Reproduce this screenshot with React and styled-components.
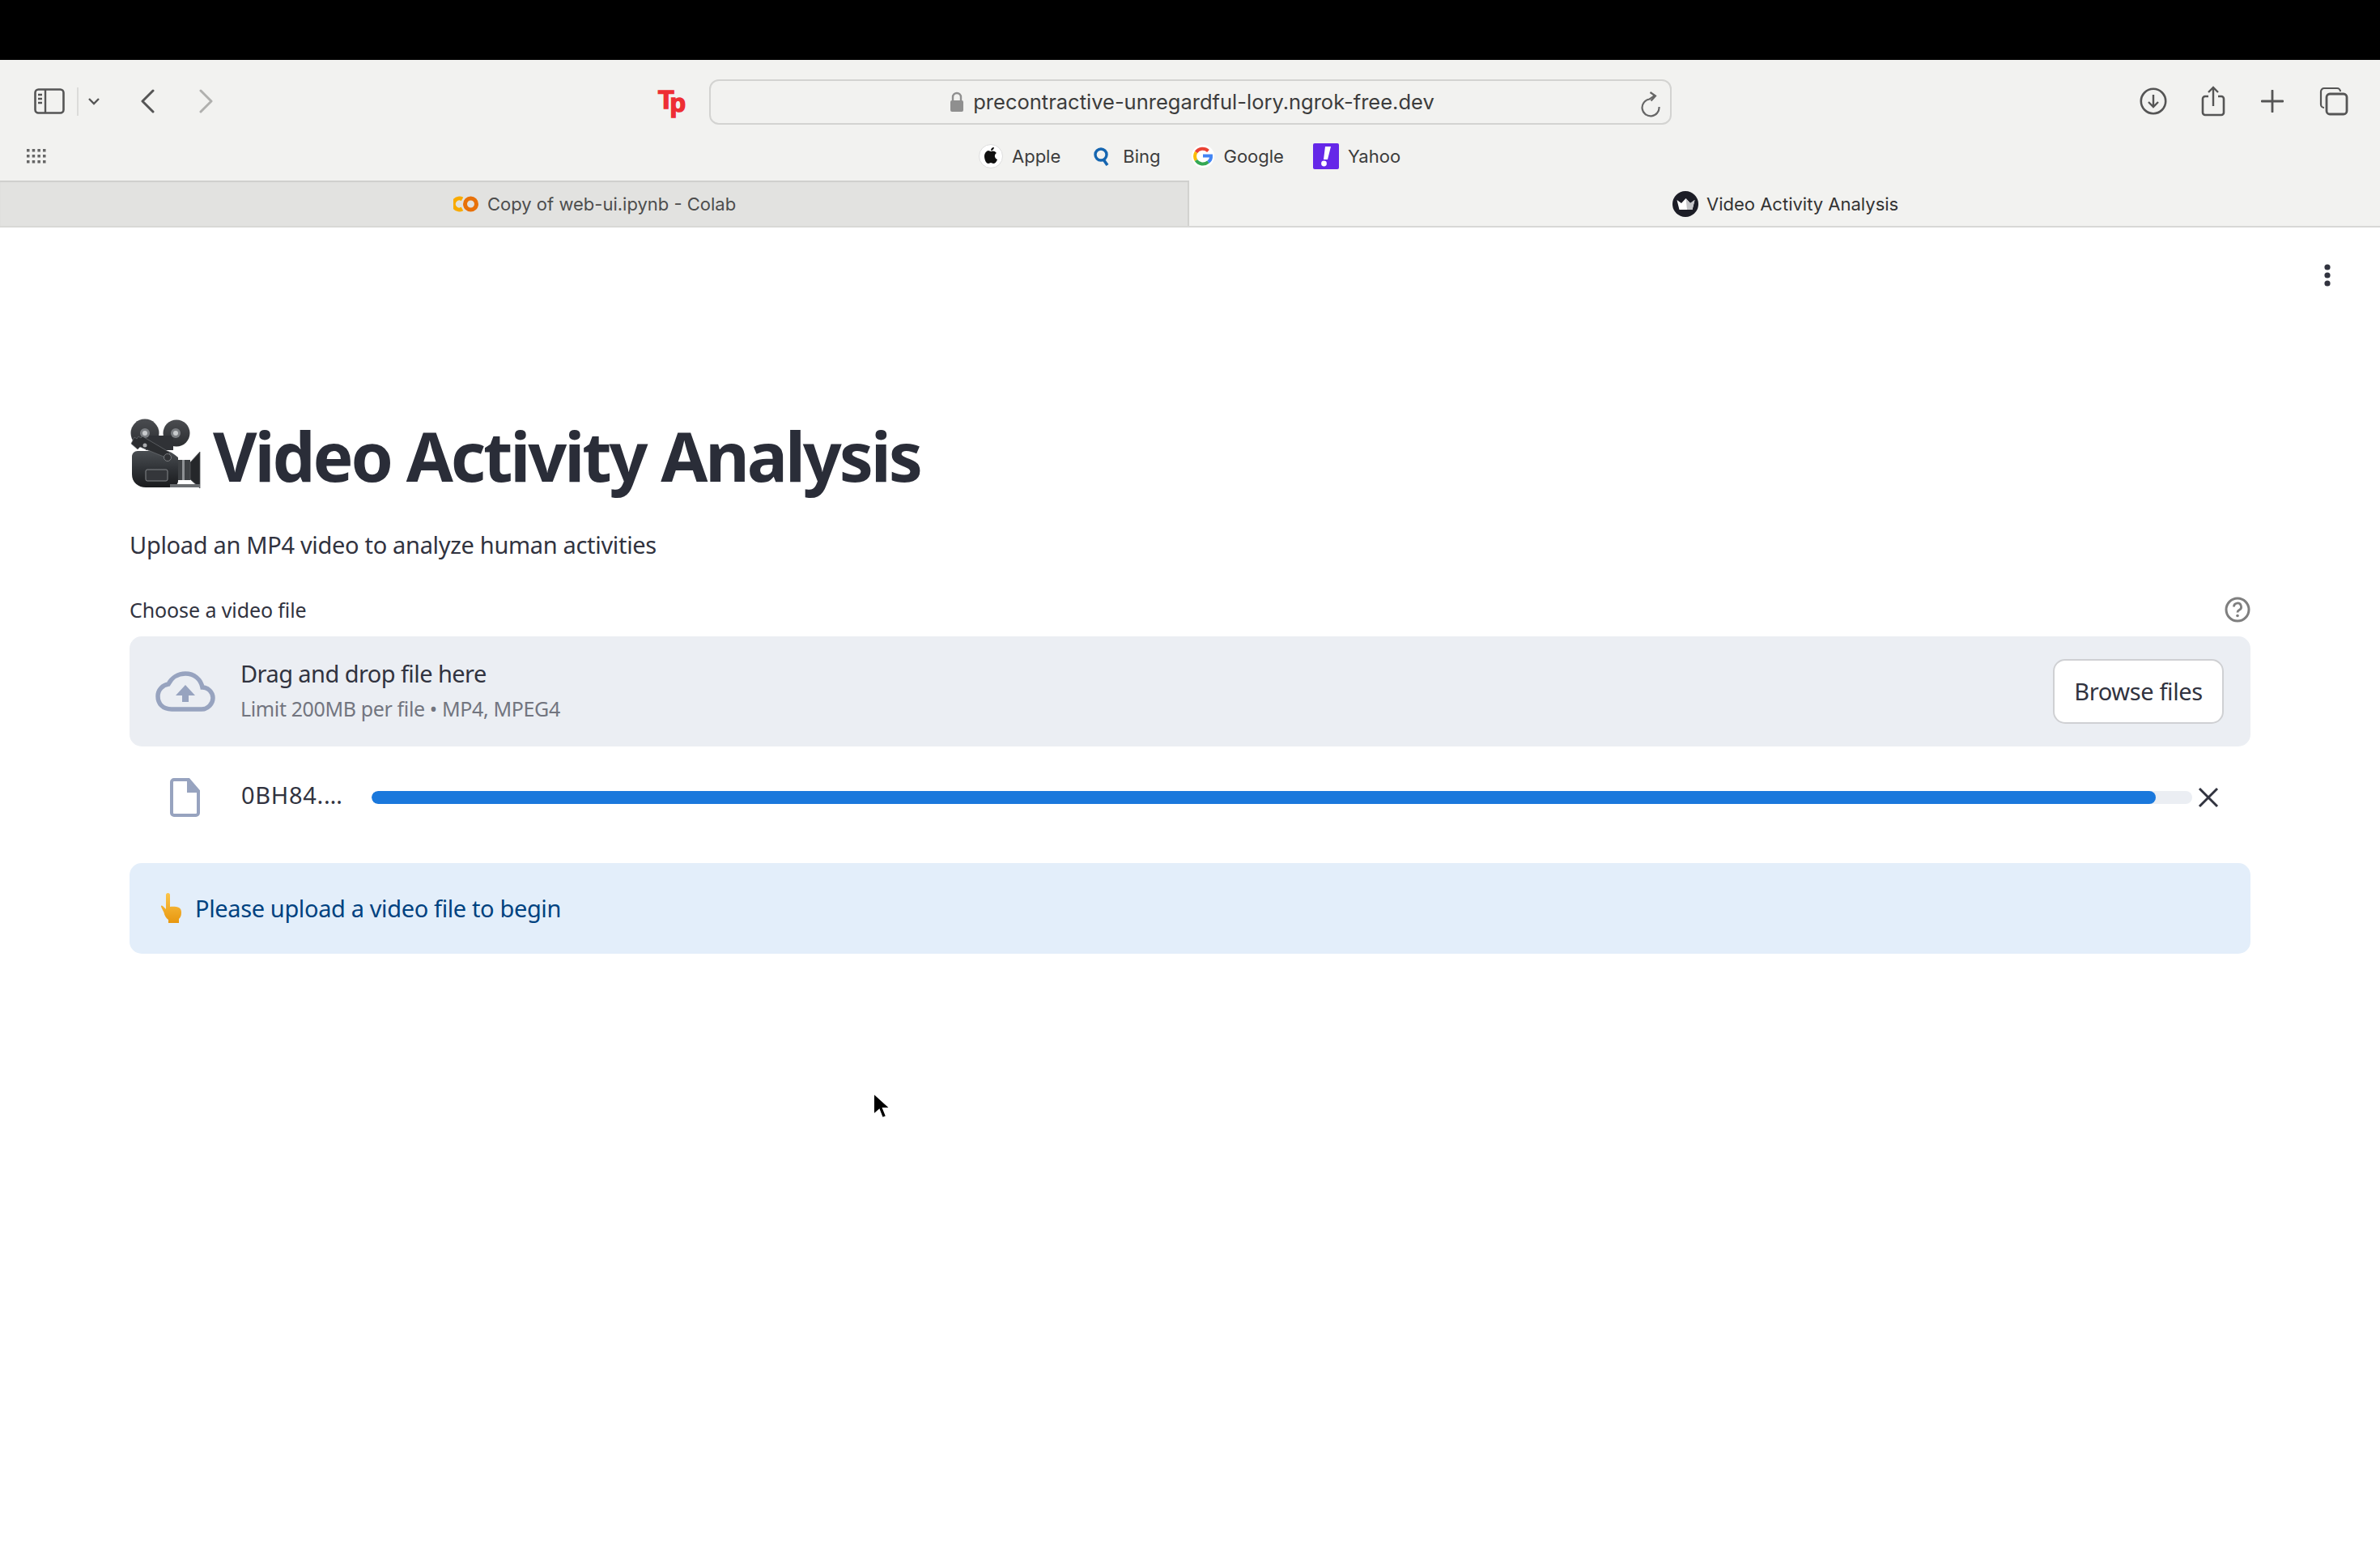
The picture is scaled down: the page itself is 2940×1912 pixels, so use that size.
import React from "react";
import styled, { createGlobalStyle } from "styled-components";

const UI_FONT = `"Noto Sans", "Open Sans", sans-serif`;
const CHROME_FONT = `Inter, "Liberation Sans", sans-serif`;

const Global = createGlobalStyle`
  html, body { margin: 0; padding: 0; background: #fff; }
  body { font-family: ${UI_FONT}; color: #31333f; }
  * { box-sizing: border-box; }
`;

const Page = styled.div`
  position: relative;
  width: 2940px;
  height: 1912px;
  display: flex;
  flex-direction: column;
  background: #fff;
  overflow: hidden;
`;

const BlackBar = styled.div`
  height: 74px;
  background: #000;
`;

const Chrome = styled.header`
  background: #f2f2f0;
  display: flex;
  flex-direction: column;
`;

const ToolRow = styled.div`
  height: 102px;
  display: flex;
  align-items: center;
  padding-left: 42px;
`;

const Tool = styled.svg`
  flex: none;
  margin-left: ${p => p.$ml || 0}px;
  display: block;
`;

const Divider = styled.div`
  width: 2px;
  height: 35px;
  background: #dcdcda;
  margin-left: 15px;
`;

const TpLogo = styled.div`
  flex: none;
  width: 36px;
  height: 34px;
  margin-left: 549px;
  display: flex;
  color: #ee2e34;
  font: 700 32px/30px "Liberation Sans", sans-serif;
  -webkit-text-stroke: 1.5px #ee2e34;
  span + span {
    margin-left: -5px;
    margin-top: 4px;
  }
`;

const AddressBar = styled.div`
  flex: none;
  width: 1189px;
  height: 56px;
  margin: 2px 0 0 27px;
  padding-left: 4px;
  border: 2px solid #d3d3d1;
  border-radius: 12px;
  display: flex;
  align-items: center;
  justify-content: center;
  position: relative;
  gap: 11px;
`;

const AddressText = styled.span`
  font: 400 25.5px/30px ${CHROME_FONT};
  color: #3c3c3c;
`;

const ReloadSlot = styled.svg`
  position: absolute;
  right: 10px;
  top: 13px;
`;

const RightTools = styled.div`
  margin-left: auto;
  margin-right: 39px;
  display: flex;
  align-items: center;
`;

const BookmarkRow = styled.div`
  height: 47px;
  padding: 0 0 13px 33px;
  display: flex;
  align-items: center;
`;

const Bookmarks = styled.nav`
  display: flex;
  align-items: center;
  margin-left: 1152px;
`;

const Bookmark = styled.a`
  display: flex;
  align-items: center;
  margin-right: ${p => p.$mr}px;
  gap: ${p => p.$gap}px;
  font: 400 22px/30px ${CHROME_FONT};
  color: #3c3c3c;
`;

const Tabs = styled.div`
  height: 58px;
  display: flex;
  border-bottom: 2px solid #d8d8d6;
`;

const Tab = styled.div`
  flex: ${p => (p.$active ? "1" : "none")};
  width: ${p => (p.$active ? "auto" : "1469px")};
  background: ${p => (p.$active ? "#f2f2f0" : "#e2e2e0")};
  box-shadow: ${p => (p.$active ? "none" : "inset 0 2px 1px #cfcfcd, inset -2px 0 0 #d2d2d0")};
  display: flex;
  align-items: center;
  padding-left: ${p => (p.$active ? "597px" : "560px")};
  padding-top: 2px;
  gap: 10px;
  font: 400 22px/30px ${CHROME_FONT};
  color: ${p => (p.$active ? "#333" : "#4d4d4d")};
`;

const MenuRow = styled.div`
  height: 117px;
  display: flex;
  justify-content: flex-end;
  align-items: center;
  padding-right: 60px;
`;

const Content = styled.main`
  padding: 0 160px;
  display: flex;
  flex-direction: column;
`;

const TitleRow = styled.div`
  display: flex;
  align-items: center;
  height: 124px;
  margin-top: 103px;
  gap: 13px;
`;

const Title = styled.h1`
  margin: 0;
  font: 700 84px/124px ${UI_FONT};
  letter-spacing: -3.1px;
  color: #2a2d38;
`;

const CameraSvg = styled.svg`
  flex: none;
  margin-top: -6px;
`;

const Subtitle = styled.p`
  margin: 28px 0 0;
  font: 400 29px/40px ${UI_FONT};
  letter-spacing: -0.32px;
  color: #31333f;
`;

const LabelRow = styled.div`
  margin-top: 40px;
  height: 40px;
  display: flex;
  align-items: center;
  justify-content: space-between;
`;

const Label = styled.label`
  font: 400 25px/40px ${UI_FONT};
  letter-spacing: -0.1px;
  color: #31333f;
`;

const Dropzone = styled.section`
  margin-top: 13px;
  height: 136px;
  background: #ebeef3;
  border-radius: 15px;
  display: flex;
  align-items: center;
  padding: 0 33px 0 32px;
`;

const DropText = styled.div`
  margin-left: 31px;
  display: flex;
  flex-direction: column;
  flex: 1;
`;

const DropTitle = styled.div`
  font: 400 29px/42px ${UI_FONT};
  letter-spacing: -0.57px;
  color: #31333f;
`;

const DropHint = styled.div`
  font: 400 25px/44px ${UI_FONT};
  letter-spacing: -0.37px;
  color: #72757f;
`;

const BrowseButton = styled.button`
  width: 211px;
  height: 80px;
  background: #fff;
  border: 2px solid #cfd0d3;
  border-radius: 15px;
  font: 400 29px/40px ${UI_FONT};
  letter-spacing: -0.37px;
  color: #31333f;
`;

const FileRow = styled.div`
  height: 144px;
  display: flex;
  align-items: center;
  padding: 0 0 18px 49px;
`;

const FileName = styled.span`
  margin-left: 51px;
  margin-top: -7px;
  width: 161px;
  font: 400 29px/40px ${UI_FONT};
  letter-spacing: 0.7px;
  color: #31333f;
`;

const Track = styled.div`
  width: 2249px;
  height: 16px;
  background: #ebeef3;
  border-radius: 8px;
  overflow: hidden;
`;

const Fill = styled.div`
  height: 100%;
  background: #1a78dc;
  border-radius: 8px;
`;

const Close = styled.svg`
  margin-left: 7px;
`;

const Alert = styled.section`
  height: 112px;
  background: #e3eefa;
  border-radius: 15px;
  display: flex;
  align-items: center;
  padding-left: 38px;
  gap: 16px;
`;

const AlertText = styled.span`
  font: 400 29px/40px ${UI_FONT};
  letter-spacing: -0.37px;
  color: #004280;
`;

const Cursor = styled.svg`
  position: absolute;
  left: 1076px;
  top: 1348px;
`;

const CameraIcon = () => (
  <CameraSvg width="90" height="90" viewBox="10 15 90 90">
    <defs>
      <linearGradient id="camBody" x1="0" y1="0" x2="0" y2="1">
        <stop offset="0" stopColor="#4a4e52" />
        <stop offset="0.5" stopColor="#2f3236" />
        <stop offset="1" stopColor="#1a1b1d" />
      </linearGradient>
      <linearGradient id="camReel" x1="0" y1="0" x2="0" y2="1">
        <stop offset="0" stopColor="#4a4c50" />
        <stop offset="1" stopColor="#2c2e31" />
      </linearGradient>
    </defs>
    <circle cx="29" cy="35" r="17.5" fill="url(#camReel)" />
    <circle cx="68" cy="35" r="16.5" fill="url(#camReel)" />
    <rect x="30" y="38" width="34" height="18" fill="#303236" />
    <circle cx="29" cy="35" r="6" fill="#7b7e82" />
    <circle cx="29" cy="35" r="3" fill="#c9cbcd" />
    <circle cx="67" cy="35" r="6" fill="#7b7e82" />
    <circle cx="67" cy="35" r="3" fill="#c9cbcd" />
    <path d="M13 64c0-4 3-7 7-7h36c4 0 9 4 14 8v29c0 5-5 8-10 8H30c-9 0-17-6-17-16z" fill="url(#camBody)" />
    <rect x="30" y="80" width="27" height="14" rx="2" fill="#34363a" stroke="#84878a" strokeWidth="1" />
    <path d="M12 48l4-8 3 2 2-3 3 2 2-2 34 20-3 7-34-14-3 3z" fill="#2b2d30" stroke="#6c6f72" strokeWidth="0.7" />
    <circle cx="29" cy="50" r="2.5" fill="#a9abad" />
    <circle cx="57" cy="65" r="4.5" fill="#303235" stroke="#8a8d90" strokeWidth="0.8" />
    <rect x="70" y="68" width="15" height="25" fill="#3e4144" />
    <rect x="75" y="68" width="3" height="25" fill="#8d9093" />
    <path d="M85 71l12-13v45l-12-11z" fill="#25272a" stroke="#55585b" strokeWidth="0.8" />
    <path d="M60 98h37v4H60z" fill="#6a6d70" />
  </CameraSvg>
);

const CloudIcon = () => (
  <svg width="74" height="50" viewBox="0 0 74 50" style={{ flex: "none" }}>
    <path
      d="M20 47C9 47 3 40 3 31c0-8 6-14 13-15C20 8 28 3 37 3c11 0 19 7 21 17 7 0 13 6 13 13s-6 14-14 14z"
      fill="none"
      stroke="#97a3bf"
      strokeWidth="5.5"
    />
    <path d="M37 17L49 30H41V38H33V30H25z" fill="#97a3bf" />
  </svg>
);

const FileIcon = () => (
  <svg width="38" height="48" viewBox="0 0 38 48" style={{ flex: "none" }}>
    <path
      d="M3 5a3 3 0 0 1 3-3h18l12 14v27a3 3 0 0 1-3 3H6a3 3 0 0 1-3-3z"
      fill="#fff"
      stroke="#97a3bf"
      strokeWidth="4"
    />
    <path d="M22 2v16h14z" fill="#97a3bf" />
  </svg>
);

const HandIcon = () => (
  <svg width="27" height="38" viewBox="0 0 27 38" style={{ flex: "none" }}>
    <defs>
      <linearGradient id="handFill" x1="0" y1="0" x2="0" y2="1">
        <stop offset="0" stopColor="#fbc54a" />
        <stop offset="1" stopColor="#e8970f" />
      </linearGradient>
    </defs>
    <path
      d="M7 2.500a2.500 2.500 0 0 1 5 0V17c4-.5 9 0 11 1 2 1 3 3 3 6 0 4-1 6-3 8v5H10v-4C7 31 5 27 4.500 24L1 17c-.5-1.500 1-2 2-1l4 4z"
      fill="url(#handFill)"
    />
  </svg>
);

export default function App() {
  return (
    <Page>
      <Global />
      <BlackBar />
      <Chrome>
        <ToolRow>
          <Tool width="38" height="32" viewBox="0 0 38 32">
            <rect x="1.500" y="1.500" width="35" height="29" rx="4" fill="none" stroke="#555" strokeWidth="2.6" />
            <path d="M14 2v28" stroke="#555" strokeWidth="2.4" />
            <path d="M5 8h5M5 13h5M5 18h5" stroke="#555" strokeWidth="2.4" />
          </Tool>
          <Divider />
          <Tool $ml={11} width="16" height="10" viewBox="0 0 16 10">
            <path d="M2 2l6 6 6-6" fill="none" stroke="#555" strokeWidth="2.4" />
          </Tool>
          <Tool $ml={49} width="18" height="30" viewBox="0 0 18 30">
            <path d="M16 2L3 15l13 13" fill="none" stroke="#555" strokeWidth="3" strokeLinecap="round" strokeLinejoin="round" />
          </Tool>
          <Tool $ml={55} width="18" height="30" viewBox="0 0 18 30">
            <path d="M2 2l13 13L2 28" fill="none" stroke="#b0b0ae" strokeWidth="3" strokeLinecap="round" strokeLinejoin="round" />
          </Tool>
          <TpLogo>
            <span>T</span>
            <span>p</span>
          </TpLogo>
          <AddressBar>
            <svg width="18" height="26" viewBox="0 0 18 26">
              <path d="M4 12V7a5 5 0 0 1 10 0v5" fill="none" stroke="#8f8f8f" strokeWidth="2.4" />
              <rect x="1" y="11" width="16" height="14" rx="2" fill="#8f8f8f" />
            </svg>
            <AddressText>precontractive-unregardful-lory.ngrok-free.dev</AddressText>
            <ReloadSlot width="28" height="32" viewBox="0 0 28 32">
              <path d="M24.500 19A10.500 10.500 0 1 1 12.500 9.500C15 8 17 6 20 5" fill="none" stroke="#666" strokeWidth="2.2" />
              <path d="M13.500 1l6.500 4.500-5.500 6" fill="none" stroke="#666" strokeWidth="2.2" />
            </ReloadSlot>
          </AddressBar>
          <RightTools>
            <Tool width="34" height="34" viewBox="0 0 34 34">
              <circle cx="17" cy="17" r="15.200" fill="none" stroke="#555" strokeWidth="2.6" />
              <path d="M17 9v15M11 18l6 6 6-6" fill="none" stroke="#555" strokeWidth="2.4" />
            </Tool>
            <Tool $ml={42} width="30" height="38" viewBox="0 0 30 38">
              <path d="M9 13H5a3 3 0 0 0-3 3v17a3 3 0 0 0 3 3h20a3 3 0 0 0 3-3V16a3 3 0 0 0-3-3h-4" fill="none" stroke="#555" strokeWidth="2.6" />
              <path d="M15 25V2M9 8l6-6 6 6" fill="none" stroke="#555" strokeWidth="2.4" />
            </Tool>
            <Tool $ml={44} width="28" height="28" viewBox="0 0 28 28">
              <path d="M14 1v26M1 14h26" stroke="#555" strokeWidth="2.8" strokeLinecap="round" />
            </Tool>
            <Tool $ml={44} width="36" height="36" viewBox="0 0 36 36">
              <path d="M6 26a4 4 0 0 1-4-4V6a4 4 0 0 1 4-4h16a4 4 0 0 1 4 4" fill="none" stroke="#555" strokeWidth="2.2" />
              <rect x="9" y="9" width="25" height="25" rx="4" fill="#f2f2f0" stroke="#555" strokeWidth="2.8" />
            </Tool>
          </RightTools>
        </ToolRow>
        <BookmarkRow>
          <Tool width="24" height="18" viewBox="0 0 24 18">
            {[0, 7, 14].map(y =>
              [0, 6.7, 13.4, 20].map(x => <rect key={`${x}-${y}`} x={x} y={y} width="3.5" height="3.5" fill="#666" />)
            )}
          </Tool>
          <Bookmarks>
            <Bookmark $mr={41} $gap={11}>
              <svg width="30" height="30" viewBox="0 0 30 30">
                <circle cx="15" cy="15" r="14.500" fill="#fff" stroke="#ddd" />
                <path d="M15 9c2-1 5-1 7 2-3 2-3 6 1 8-1 3-3 5-5 5-1 0-2-1-3-1s-2 1-3 1c-3 0-5-5-5-9s3-7 5-7c1 0 2 1 3 1zM15 8c0-2 1-4 4-4 0 2-2 4-4 4z" fill="#111" />
              </svg>
              Apple
            </Bookmark>
            <Bookmark $mr={38} $gap={16}>
              <svg width="20" height="24" viewBox="0 0 20 24">
                <circle cx="9" cy="10" r="7" fill="none" stroke="#1565b0" strokeWidth="3.4" />
                <path d="M12 16l5 7" stroke="#1565b0" strokeWidth="3.6" />
              </svg>
              Bing
            </Bookmark>
            <Bookmark $mr={36} $gap={12}>
              <svg width="28" height="30" viewBox="0 0 28 30">
                <circle cx="14" cy="15" r="14" fill="#fff" />
                <path d="M20.500 8.500A10 10 0 0 0 5.500 10" fill="none" stroke="#ea4335" strokeWidth="4" />
                <path d="M5.500 10a10 10 0 0 0 0 10" fill="none" stroke="#fbbc05" strokeWidth="4" />
                <path d="M5.500 20a10 10 0 0 0 15 2" fill="none" stroke="#34a853" strokeWidth="4" />
                <path d="M14 14.500h10c.3 3-1 5.800-3.500 7.500" fill="none" stroke="#4285f4" strokeWidth="4" />
              </svg>
              Google
            </Bookmark>
            <Bookmark $mr={0} $gap={11}>
              <svg width="32" height="32" viewBox="0 0 32 32">
                <rect width="32" height="32" rx="2" fill="#6527e8" />
                <path d="M15 4h7l-4 16h-5z" fill="#fff" />
                <circle cx="13.500" cy="25" r="3.400" fill="#fff" />
              </svg>
              Yahoo
            </Bookmark>
          </Bookmarks>
        </BookmarkRow>
        <Tabs>
          <Tab>
            <svg width="32" height="20" viewBox="0 0 32 20">
              <path d="M11 4a7 7 0 1 0 0 12" fill="none" stroke="#f9ab00" strokeWidth="5" />
              <circle cx="21.500" cy="10" r="7" fill="none" stroke="#e8710a" strokeWidth="5" />
            </svg>
            Copy of web-ui.ipynb - Colab
          </Tab>
          <Tab $active>
            <svg width="32" height="32" viewBox="0 0 32 32">
              <circle cx="16" cy="16" r="16" fill="#1c1d26" />
              <path d="M5.500 11l5.500 4 5.500-6 5.500 6 5.500-4-3 12H8.500z" fill="#fff" />
              <path d="M16.500 9l5.500 6 5.500-4-3 12H18z" fill="#c4c5c8" />
            </svg>
            Video Activity Analysis
          </Tab>
        </Tabs>
      </Chrome>
      <MenuRow>
        <svg width="10" height="28" viewBox="0 0 10 28">
          <circle cx="5" cy="4" r="3.600" fill="#31333f" />
          <circle cx="5" cy="14" r="3.600" fill="#31333f" />
          <circle cx="5" cy="24" r="3.600" fill="#31333f" />
        </svg>
      </MenuRow>
      <Content>
        <TitleRow>
          <CameraIcon />
          <Title>Video Activity Analysis</Title>
        </TitleRow>
        <Subtitle>Upload an MP4 video to analyze human activities</Subtitle>
        <LabelRow>
          <Label>Choose a video file</Label>
          <svg width="32" height="32" viewBox="0 0 32 32">
            <circle cx="16" cy="16" r="14" fill="none" stroke="#7f7f7f" strokeWidth="3" />
            <path d="M11.500 12.500a4.500 4.500 0 1 1 6.500 4c-1.400.8-2 1.500-2 3" fill="none" stroke="#7f7f7f" strokeWidth="2.8" />
            <circle cx="16" cy="23.500" r="1.800" fill="#7f7f7f" />
          </svg>
        </LabelRow>
        <Dropzone>
          <CloudIcon />
          <DropText>
            <DropTitle>Drag and drop file here</DropTitle>
            <DropHint>Limit 200MB per file • MP4, MPEG4</DropHint>
          </DropText>
          <BrowseButton>Browse files</BrowseButton>
        </Dropzone>
        <FileRow>
          <FileIcon />
          <FileName>0BH84.…</FileName>
          <Track>
            <Fill style={{ width: `${(2204 / 2249) * 100}%` }} />
          </Track>
          <Close width="26" height="26" viewBox="0 0 26 26">
            <path d="M2 2l22 22M24 2L2 24" stroke="#31333f" strokeWidth="3" />
          </Close>
        </FileRow>
        <Alert>
          <HandIcon />
          <AlertText>Please upload a video file to begin</AlertText>
        </Alert>
      </Content>
      <Cursor width="24" height="36" viewBox="0 0 24 36">
        <path d="M3 2v27l7-6 4 10 5-2-4-10h9z" fill="#000" stroke="#fff" strokeWidth="2" />
      </Cursor>
    </Page>
  );
}
